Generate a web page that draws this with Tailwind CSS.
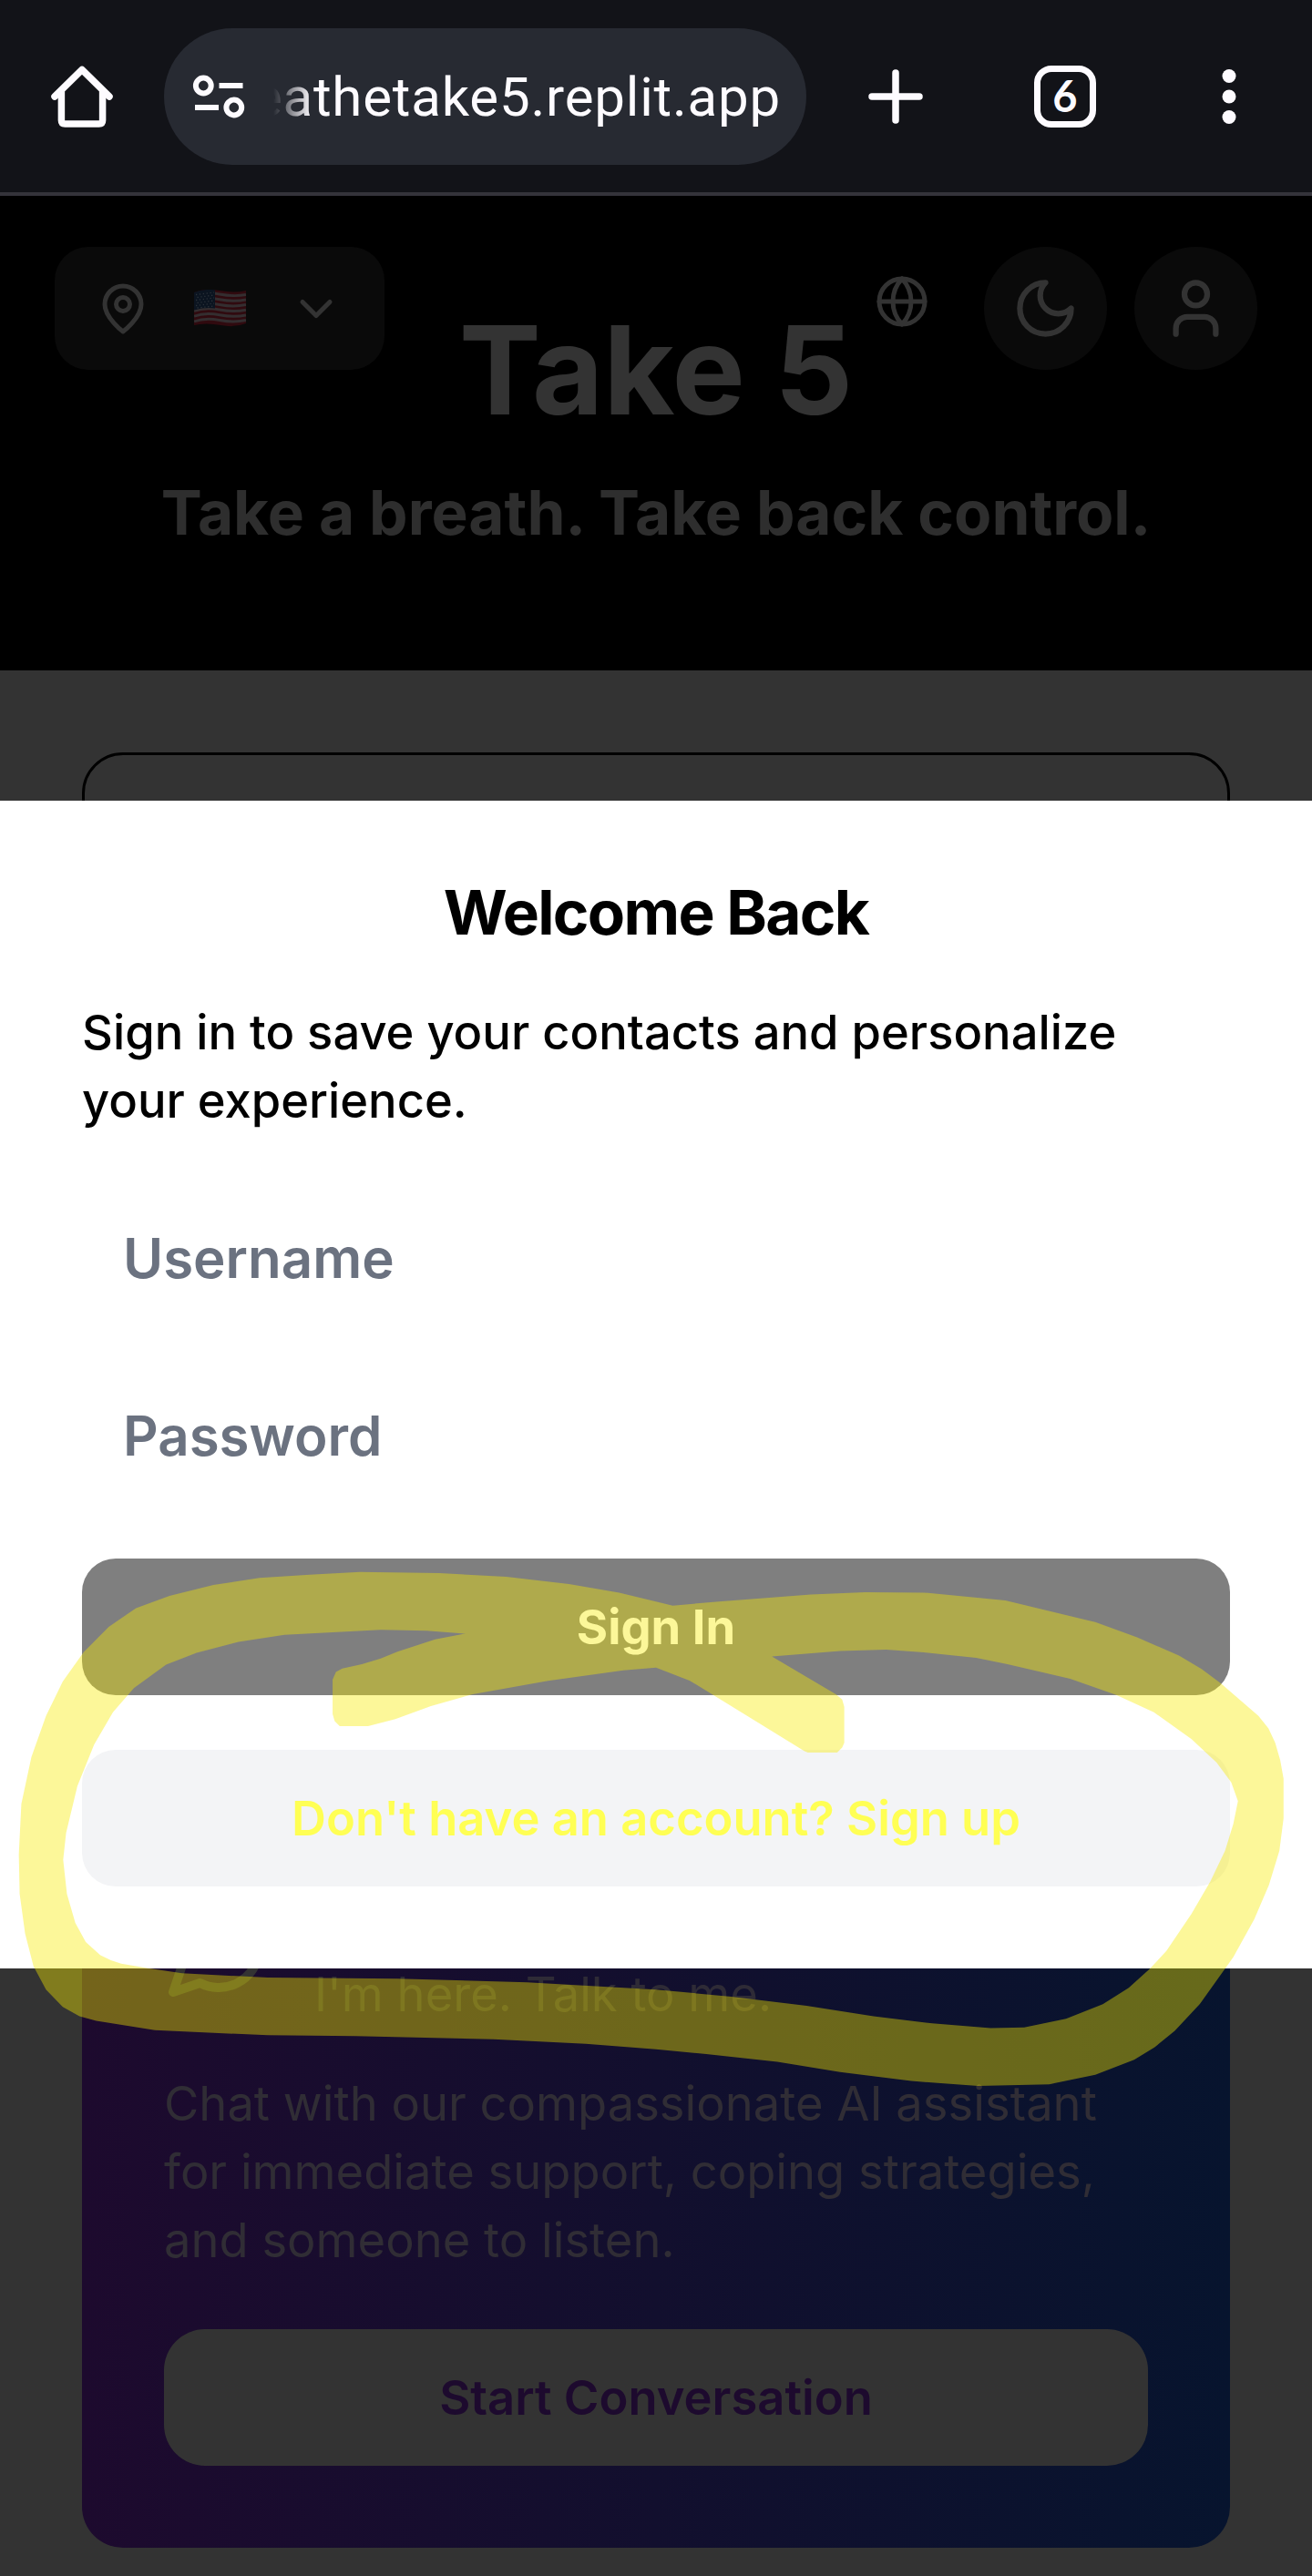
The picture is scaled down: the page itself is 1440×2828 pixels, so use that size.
<!DOCTYPE html>
<html lang="en">
<head>
<meta charset="utf-8">
<title>Take 5</title>
<script src="https://cdn.jsdelivr.net/npm/@tailwindcss/browser@4"></script>
</head>
<body class="bg-[#333333] font-['Inter',sans-serif]">
<div class="relative w-[1440px] h-[2828px] overflow-hidden">

  <!-- Browser toolbar -->
  <div class="flex items-center h-[215px] bg-[#121318] border-b-4 border-[#34333a] text-[#fdfbff]">
    <svg class="ml-[56px] w-[68px] h-[68px] shrink-0" viewBox="0 0 68 68" fill="none" stroke="currentColor" stroke-width="7.5" stroke-linejoin="round" stroke-linecap="round"><path d="M4 34 34 4.500l30 29.500"/><path d="M11.400 29v31q0 4 4 4h37.200q4 0 4-4V29"/></svg>
    <div class="ml-[56px] w-[705px] h-[150px] rounded-full bg-[#272a32] flex items-center shrink-0">
      <svg class="ml-[31px] w-[58px] h-[50px] shrink-0" viewBox="0 0 58 50" fill="none" stroke="currentColor" stroke-width="6"><circle cx="12.3" cy="13" r="8.4"/><path d="M29.5 13H55.5M3 37H29"/><circle cx="45.8" cy="37" r="8.4"/></svg>
      <div class="ml-[31px] mt-[3px] w-[557px] overflow-hidden flex justify-end [mask-image:linear-gradient(to_right,transparent,black_42px)]">
        <span class="font-[Roboto] text-[60px] leading-[84px] whitespace-nowrap tracking-[0.8px]">eathetake5.replit.app</span>
      </div>
    </div>
    <svg class="ml-[67px] w-[62px] h-[62px] shrink-0" viewBox="0 0 62 62" fill="none" stroke="currentColor" stroke-width="7.5" stroke-linecap="round"><path d="M31 5v52M5 31h52"/></svg>
    <div class="ml-[121px] w-[68px] h-[68px] shrink-0 border-[7.5px] border-[#fdfbff] rounded-[19px] flex items-center justify-center font-[Lato] font-bold text-[47px] leading-none">6</div>
    <svg class="ml-[138px] w-[16px] h-[62px] shrink-0" viewBox="0 0 16 62" fill="currentColor"><circle cx="8" cy="8.5" r="7.5"/><circle cx="8" cy="31" r="7.5"/><circle cx="8" cy="53.5" r="7.5"/></svg>
  </div>

  <!-- Page header -->
  <header class="relative h-[521px] bg-black pt-[116px] text-center text-[#333333]">
    <div class="absolute left-[60px] top-[56px] w-[362px] h-[135px] rounded-[37px] bg-[#0a0a0a] px-[45px] flex items-center justify-between">
      <svg class="w-[60px] h-[60px]" viewBox="0 0 24 24" fill="none" stroke="currentColor" stroke-width="2" stroke-linecap="round" stroke-linejoin="round"><path d="M20 10c0 6-8 12-8 12s-8-6-8-12a8 8 0 0 1 16 0Z"/><circle cx="12" cy="10" r="3"/></svg>
      <svg class="w-[57px] h-[42px]" viewBox="0 0 57 42">
        <defs><clipPath id="flag"><path d="M0 3Q12-2 28 1T57 1V37Q45 42 29 39T0 39Z"/></clipPath></defs>
        <g clip-path="url(#flag)">
          <path fill="#300a0f" d="M0 0h57v42H0z"/>
          <g fill="none" stroke="#342e30" stroke-width="2.9">
            <path d="M0 6.5Q12 2 28 5T57 5.500"/><path d="M0 12.200Q12 7.700 28 10.700T57 11"/><path d="M0 18Q12 13.500 28 16.500T57 16.500"/><path d="M0 23.500Q12 19 28 22T57 22.200"/><path d="M0 29.200Q12 24.700 28 27.700T57 28"/><path d="M0 35Q12 30.500 28 33.500T57 33.500"/>
          </g>
          <path fill="#0b1420" d="M0 0h23v20.500Q12 19 0 22.500z"/>
          <g stroke="#2b3138" stroke-width="1.300" stroke-dasharray="1.300 2.600"><path d="M2 5.500 22 3M3.500 8.500 22 6M2 11.500 22 9M3.500 14.500 22 12M2 17.500 22 15M3.500 20 22 18"/></g>
        </g>
      </svg>
      <svg class="w-[60px] h-[60px]" viewBox="0 0 24 24" fill="none" stroke="currentColor" stroke-width="2" stroke-linecap="round" stroke-linejoin="round"><path d="m6 9 6 6 6-6"/></svg>
    </div>
    <div class="absolute right-[60px] top-[56px] h-[135px] flex">
      <svg class="w-[60px] h-[60px] mt-[30px] mr-[60px]" viewBox="0 0 24 24" fill="none" stroke="currentColor" stroke-width="2" stroke-linecap="round" stroke-linejoin="round"><circle cx="12" cy="12" r="10"/><path d="M12 2a14.500 14.500 0 0 0 0 20 14.500 14.500 0 0 0 0-20"/><path d="M2 12h20"/></svg>
      <div class="w-[135px] h-[135px] rounded-full bg-[#0a0a0a] flex items-center justify-center mr-[30px]">
        <svg class="w-[75px] h-[75px]" viewBox="0 0 24 24" fill="none" stroke="currentColor" stroke-width="2" stroke-linecap="round" stroke-linejoin="round"><path d="M12 3a6 6 0 0 0 9 9 9 9 0 1 1-9-9Z"/></svg>
      </div>
      <div class="w-[135px] h-[135px] rounded-full bg-[#0a0a0a] flex items-center justify-center">
        <svg class="w-[75px] h-[75px]" viewBox="0 0 24 24" fill="none" stroke="currentColor" stroke-width="2" stroke-linecap="round" stroke-linejoin="round"><path d="M19 21v-2a4 4 0 0 0-4-4H9a4 4 0 0 0-4 4v2"/><circle cx="12" cy="7" r="4"/></svg>
      </div>
    </div>
    <h1 class="text-[135px] leading-[150px] font-bold">Take 5</h1>
    <p class="mt-[29px] text-[67.5px] leading-[105px] font-bold text-[#2e2e2e]">Take a breath. Take back control.</p>
  </header>

  <!-- Page content -->
  <main class="px-[90px] pt-[90px]">
    <div class="h-[1101px] rounded-[45px] border-[3px] border-black"></div>
    <div class="mt-[60px] h-[810px] rounded-[45px] bg-[linear-gradient(to_right,#1d0a2e,#07142e)] p-[90px]">
      <div class="flex h-[150px] items-end">
        <svg class="w-[120px] h-[120px] mb-[30px] text-[#333333]" viewBox="0 0 24 24" fill="none" stroke="currentColor" stroke-width="2" stroke-linecap="round" stroke-linejoin="round"><path d="M7.900 20A9 9 0 1 0 4 16.100L2 22Z"/></svg>
        <p class="ml-[45px] text-[52.5px] leading-[75px] text-[#2e2b36]">I'm here. Talk to me.</p>
      </div>
      <p class="mt-[45px] text-[52.5px] leading-[75px] text-[#302d35] whitespace-nowrap">Chat with our compassionate AI assistant<br>for immediate support, coping strategies,<br>and someone to listen.</p>
      <button class="mt-[60px] block w-full h-[150px] rounded-[45px] bg-[#333333] text-[52.5px] leading-[75px] font-semibold text-[#1d0a2e]">Start Conversation</button>
    </div>
  </main>

  <!-- Sign-in dialog -->
  <div class="absolute inset-x-0 top-[879px] h-[1282px] bg-white px-[90px] pt-[89px] flex flex-col text-black">
    <h2 class="text-center text-[67.5px] leading-[68px] font-bold tracking-[-0.025em]">Welcome Back</h2>
    <p class="mt-[60px] text-[52.5px] leading-[75px] font-medium whitespace-nowrap">Sign in to save your contacts and personalize<br>your experience.</p>
    <div class="mt-[60px] h-[150px] px-[45px] flex items-center text-[60px] font-semibold text-[#6b7280]">Username</div>
    <div class="mt-[45px] h-[150px] px-[45px] flex items-center text-[60px] font-semibold text-[#6b7280]">Password</div>
    <button class="mt-[60px] h-[150px] rounded-[37px] bg-[#7f7f7f] text-[52.5px] leading-[75px] font-bold text-white">Sign In</button>
    <button class="mt-[60px] h-[150px] rounded-[37px] bg-[#f3f4f6] text-[52.5px] leading-[75px] font-semibold text-[#ffff54]">Don't have an account? Sign up</button>
  </div>

  <!-- Highlighter annotation -->
  <svg class="absolute left-0 top-[1680px] w-[1440px] h-[620px]" viewBox="0 0 3136 1568" preserveAspectRatio="none">
    <path fill="#f8eb00" fill-opacity=".4" fill-rule="evenodd" d="M1608 209 1718 198 1938 178 2068 172 2208 173 2403 195 2618 255 2718 297 2818 348 2872 385 2918 425 3008 515 3032 550 3048 590 3060 638 3068 690V800L3058 890 3033 985 2998 1080 2948 1185 2868 1315 2808 1390 2760 1435 2711 1470 2618 1512 2508 1538 2338 1543 2178 1529 2008 1504 1858 1476 1688 1454 1568 1441 1400 1426 1180 1413 850 1404 640 1402 370 1388 230 1362 190 1349 150 1323 110 1275 80 1210 60 1120 47 1010 45 900 51 760 75 630 110 515 150 420 200 338 260 268 325 216 405 182 510 152 620 132 740 123 860 116 1050 119 1210 129 1360 149 1480 173 1568 198Z
    M1112 287 1020 279 910 276 680 290 570 310 470 340 397 373 320 438 270 505 225 595 185 710 158 840 151 915 160 1010 180 1090 205 1143 240 1180 265 1194 290 1203 350 1215 435 1230 640 1242 950 1245 1260 1255 1568 1275 1748 1295 1928 1320 2088 1349 2228 1369 2368 1382 2448 1380 2548 1356 2636 1316 2698 1270 2748 1218 2788 1168 2848 1065 2893 975 2928 890 2948 815 2959 752 2943 700 2908 645 2848 580 2758 505 2668 457 2558 412 2408 372 2333 354 2208 339 2118 331 2008 335 1845 350 1998 455 2013 470 2018 490V590L2013 603 2001 617H1931L1923 613 1648 417 1568 381 1490 389 1310 418 1130 455 1030 488 945 524 880 544H812L800 530 795 510V415L803 393 818 384 865 372 910 356 950 337 1040 303Z"/>
  </svg>
</div>
</body>
</html>
